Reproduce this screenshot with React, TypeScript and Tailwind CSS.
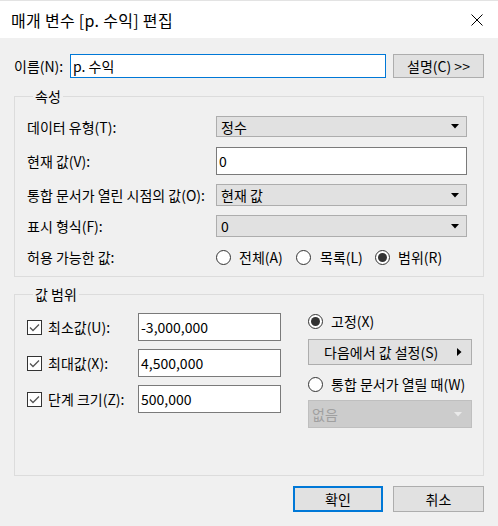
import React from "react";

const font = { fontFamily: '"Noto Sans CJK KR", "Liberation Sans", sans-serif' };

function Arrow({ light = false }: { light?: boolean }) {
  return (
    <svg width="8" height="5" viewBox="0 0 8 5" className="shrink-0">
      <polygon points="0,0 8,0 4,4.5" fill={light ? "#eaeaea" : "#000"} />
    </svg>
  );
}

function Select({ value, h = "h-[22px]" }: { value: string; h?: string }) {
  return (
    <div className={`w-[251px] ${h} flex items-center justify-between pl-[4px] pr-[7px] bg-[#e1e1e1] border border-[#adadad]`}>
      <span>{value}</span>
      <Arrow />
    </div>
  );
}

function Radio({ checked = false }: { checked?: boolean }) {
  return (
    <span className="w-[15px] h-[15px] rounded-full border border-[#333] bg-white flex items-center justify-center shrink-0">
      {checked && <span className="w-[9px] h-[9px] rounded-full bg-[#333]" />}
    </span>
  );
}

function Check() {
  return (
    <span className="w-[15px] h-[15px] border border-[#333] bg-white flex items-center justify-center shrink-0">
      <svg width="11" height="9" viewBox="0 0 11 9">
        <polyline points="1,4.5 4,7.5 10,1.5" fill="none" stroke="#555" strokeWidth="1.3" />
      </svg>
    </span>
  );
}

function NumRow({ label, value }: { label: string; value: string }) {
  return (
    <div className="flex items-center h-[28px]">
      <Check />
      <span className="ml-[6px] w-[90px]">{label}</span>
      <div className="w-[143px] h-[28px] flex items-center pl-[2px] bg-white border border-[#7a7a7a]">{value}</div>
    </div>
  );
}

export default function App() {
  return (
    <div style={font} className="w-[498px] h-[526px] bg-[#f0f0f0] text-[14px] text-black leading-none flex flex-col">
      {/* Title bar */}
      <div className="h-[38px] bg-white border-t border-[#e3e3e3] flex items-center justify-between pl-[11px] pr-[15px]">
        <span className="text-[16px] tracking-[0.3px]">매개 변수 [p. 수익] 편집</span>
        <svg width="12" height="12" viewBox="0 0 12 12">
          <path d="M0.5 0.5 L11.5 11.5 M11.5 0.5 L0.5 11.5" stroke="#000" strokeWidth="1" />
        </svg>
      </div>

      <div className="flex flex-col px-[14px] pt-[16px]">
        {/* Name row */}
        <div className="flex items-center h-[24px]">
          <span className="w-[56px]">이름(N):</span>
          <div className="w-[316px] h-[24px] flex items-center pl-[2px] bg-white border border-[#0078d7]">p. 수익</div>
          <div className="ml-[7px] w-[91px] h-[24px] flex items-center justify-center bg-[#e1e1e1] border border-[#adadad]">설명(C) &gt;&gt;</div>
        </div>

        {/* Properties group */}
        <fieldset className="mt-[10px] border border-[#dcdcdc] pl-[12px] pr-[16px] pb-[9px]">
          <legend className="ml-[6px] px-[2px] leading-[16px]">속성</legend>
          <div className="flex items-center justify-between mt-[12px] h-[21px]">
            <span>데이터 유형(T):</span>
            <Select value="정수" h="h-[21px]" />
          </div>
          <div className="flex items-center justify-between mt-[10px]">
            <span>현재 값(V):</span>
            <div className="w-[251px] h-[28px] flex items-center pl-[2px] bg-white border border-[#7a7a7a]">0</div>
          </div>
          <div className="flex items-center justify-between mt-[9px]">
            <span>통합 문서가 열린 시점의 값(O):</span>
            <Select value="현재 값" />
          </div>
          <div className="flex items-center justify-between mt-[9px]">
            <span>표시 형식(F):</span>
            <Select value="0" />
          </div>
          <div className="flex items-center justify-between mt-[10px] h-[20px]">
            <span>허용 가능한 값:</span>
            <div className="w-[251px] flex items-center">
              <Radio />
              <span className="ml-[8px] w-[57px]">전체(A)</span>
              <Radio />
              <span className="ml-[9px] w-[55px]">목록(L)</span>
              <Radio checked />
              <span className="ml-[8px]">범위(R)</span>
            </div>
          </div>
        </fieldset>

        {/* Value range group */}
        <fieldset className="mt-[9px] border border-[#dcdcdc] pl-[12px] pr-[11px] h-[190px]">
          <legend className="ml-[6px] px-[2px] leading-[16px]">값 범위</legend>
          <div className="flex mt-[11px]">
            <div className="flex flex-col gap-[8px]">
              <NumRow label="최소값(U):" value="-3,000,000" />
              <NumRow label="최대값(X):" value="4,500,000" />
              <NumRow label="단계 크기(Z):" value="500,000" />
            </div>
            <div className="ml-[27px] w-[164px] flex flex-col">
              <div className="flex items-center h-[20px] mt-[-2px]">
                <Radio checked />
                <span className="ml-[8px]">고정(X)</span>
              </div>
              <div className="mt-[8px] h-[26px] flex items-center justify-between pl-[15px] pr-[9px] bg-[#e1e1e1] border border-[#adadad]">
                <span>다음에서 값 설정(S)</span>
                <svg width="5" height="8" viewBox="0 0 5 8">
                  <polygon points="0,0 4.5,4 0,8" fill="#000" />
                </svg>
              </div>
              <div className="flex items-center h-[20px] mt-[9px]">
                <Radio />
                <span className="ml-[8px]">통합 문서가 열릴 때(W)</span>
              </div>
              <div className="mt-[6px] h-[28px] flex items-center justify-between pl-[3px] pr-[9px] bg-[#cccccc] border border-[#bfbfbf] text-[#a0a0a0]">
                <span>없음</span>
                <Arrow light />
              </div>
            </div>
          </div>
        </fieldset>

        {/* Buttons */}
        <div className="flex justify-end gap-[10px] mt-[10px]">
          <div className="w-[90px] h-[26px] flex items-center justify-center bg-[#e1e1e1] border-2 border-[#0078d7]">확인</div>
          <div className="w-[91px] h-[26px] flex items-center justify-center bg-[#e1e1e1] border border-[#adadad]">취소</div>
        </div>
      </div>
    </div>
  );
}
